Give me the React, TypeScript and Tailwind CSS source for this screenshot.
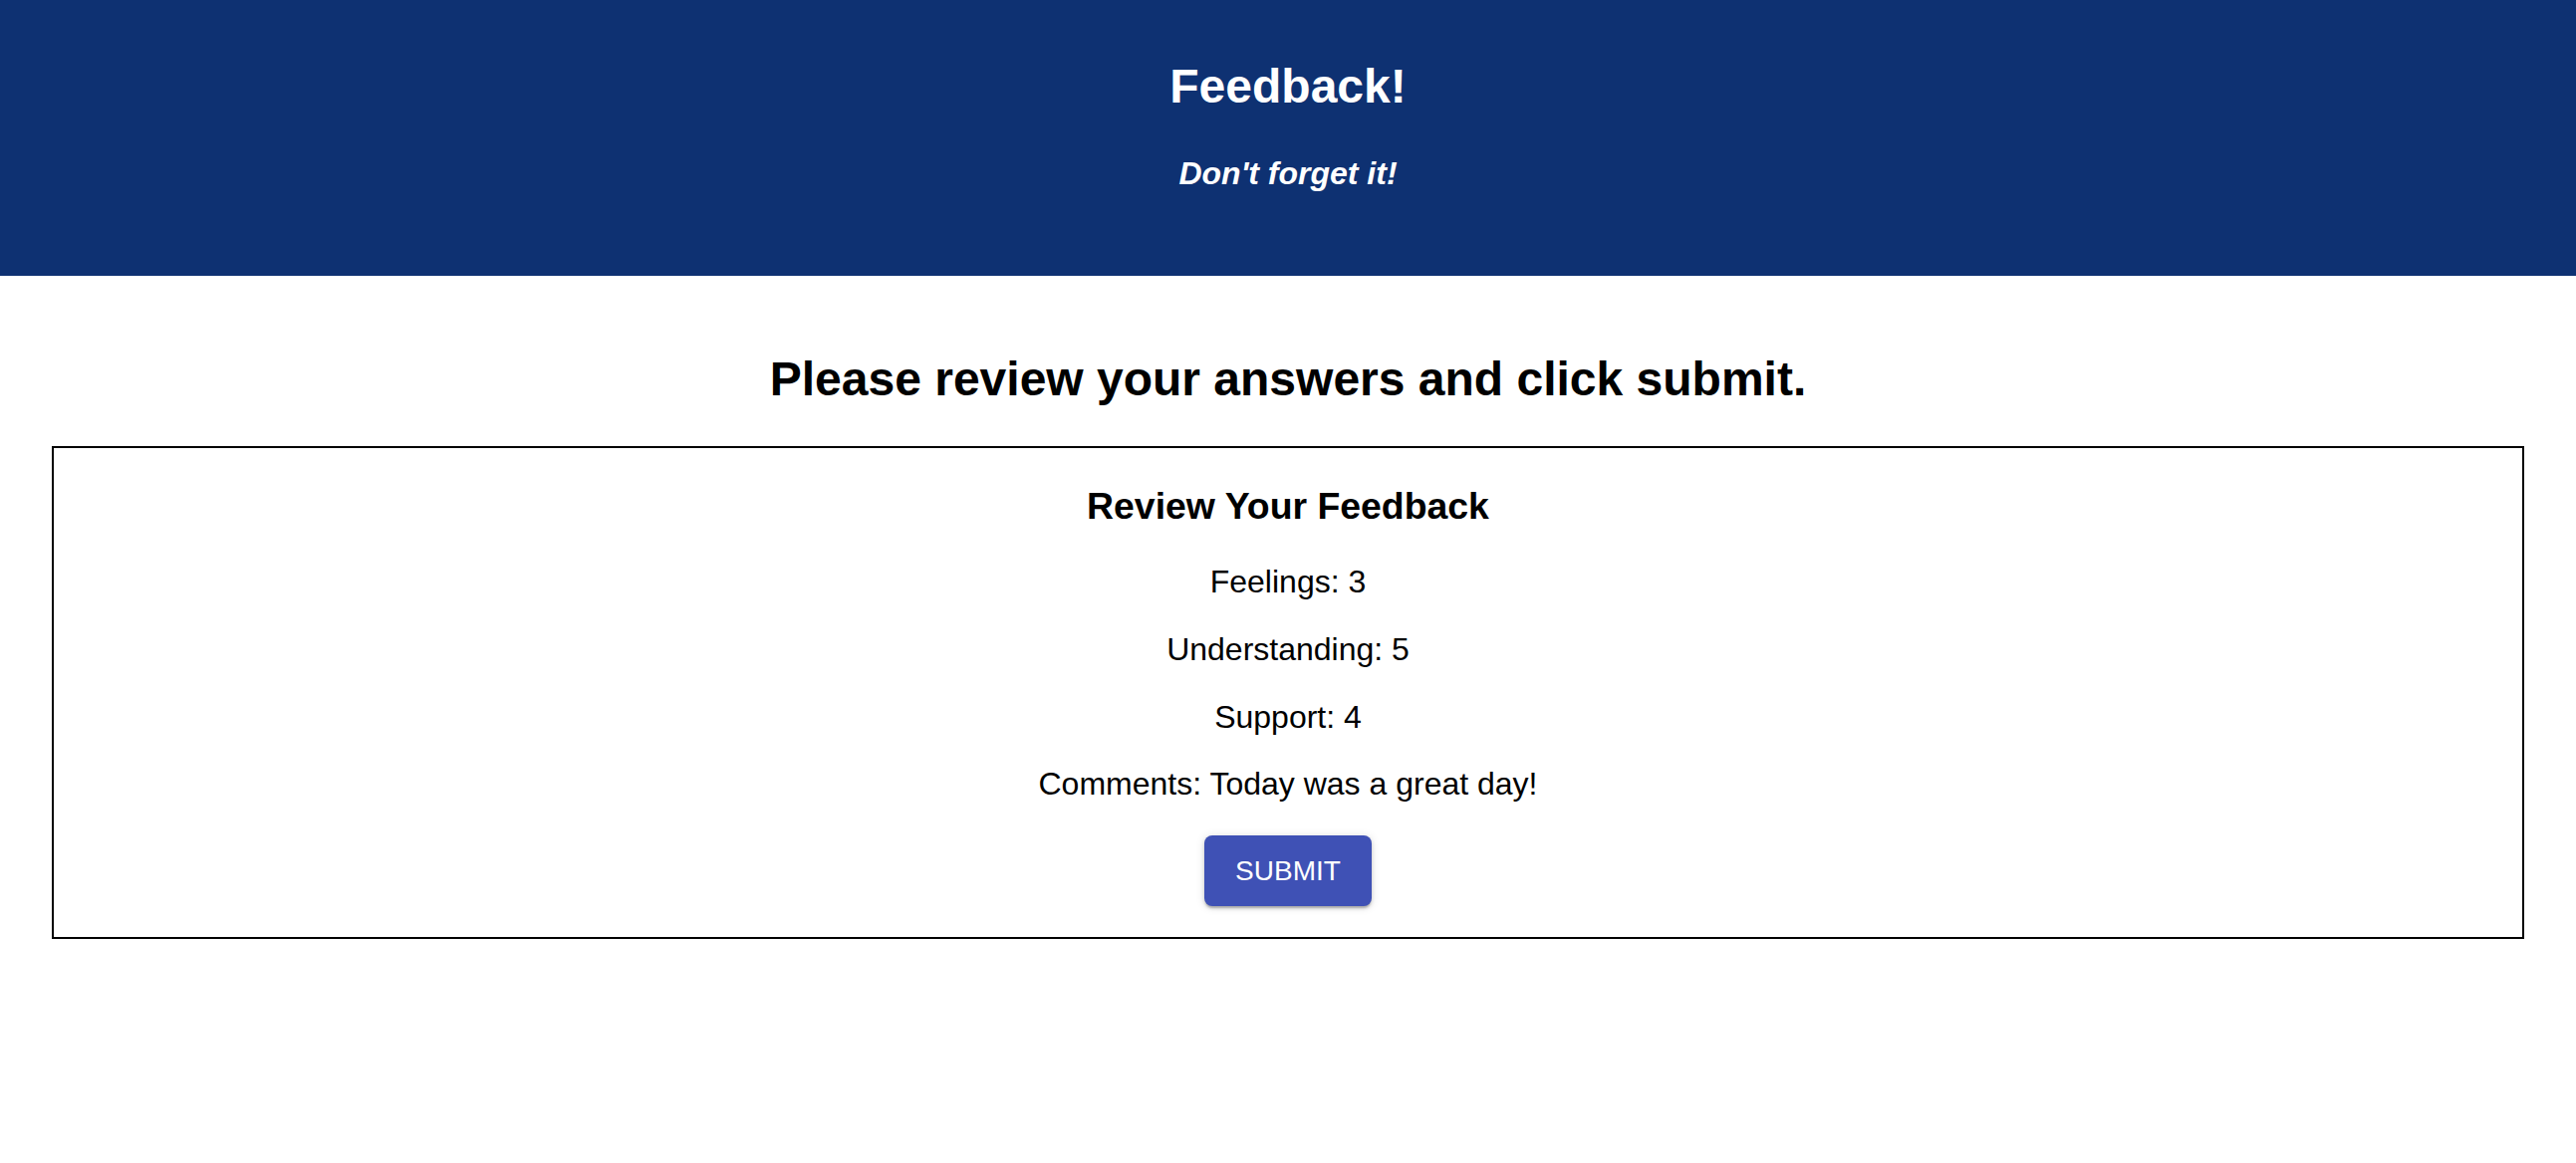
import React from "react";

export default function App() {
  const items = [
    "Feelings: 3",
    "Understanding: 5",
    "Support: 4",
    "Comments: Today was a great day!",
  ];
  return (
    <div
      className="min-h-screen bg-white text-black"
      style={{ fontFamily: '"Liberation Sans", Arial, Helvetica, sans-serif' }}
    >
      <header className="flex h-[277px] flex-col items-center bg-[#0e3172] pt-[59px] text-white">
        <h1 className="text-[48px] font-bold leading-[55px]">Feedback!</h1>
        <h4 className="mt-[42px] text-[32px] font-bold italic leading-[37px]">
          Don't forget it!
        </h4>
      </header>
      <main className="flex flex-col items-center">
        <h2 className="mt-[76px] mb-[40px] text-[48px] font-bold leading-[55px]">
          Please review your answers and click submit.
        </h2>
        <div className="flex w-[2482px] flex-col items-center border-2 border-black pt-[37px] pb-[31px]">
          <h3 className="text-[37.4px] font-bold leading-[43px]">Review Your Feedback</h3>
          <div className="mt-[36px] flex flex-col items-center gap-[31px]">
            {items.map((t) => (
              <p key={t} className="text-[32px] leading-[36.8px]">
                {t}
              </p>
            ))}
          </div>
          <button className="mt-[33px] flex h-[71px] w-[168px] items-center justify-center rounded-[8px] bg-[#3f51b5] text-[28px] text-white shadow-[0_3px_2px_-1px_rgba(0,0,0,0.2),0_2px_4px_0_rgba(0,0,0,0.14),0_1px_10px_0_rgba(0,0,0,0.12)]">
            SUBMIT
          </button>
        </div>
      </main>
    </div>
  );
}
